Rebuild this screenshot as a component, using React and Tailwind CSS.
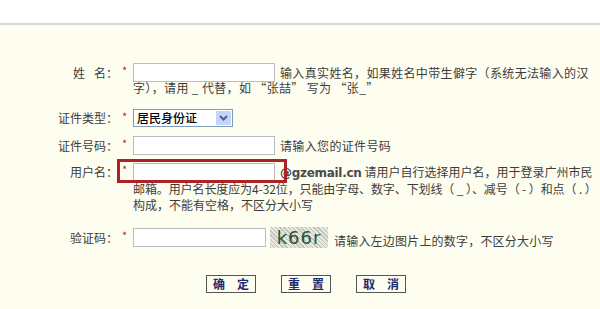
import React from 'react'

const Star = () => (
    <span className="w-[15px] shrink-0 pl-[4px] pt-[1px] text-[11px] leading-[12px] text-[#b3302c]">*</span>
)

const Input = ({ w = 'w-[142px]' }) => (
    <div className={`${w} h-[19px] shrink-0 border border-[#b9bcc4] bg-white`} />
)

export default function App() {
    return (
        <div className="relative w-[600px] h-[309px] overflow-hidden bg-[#fefef0] text-[12px] text-[#3c3c3c] font-['Noto_Sans_CJK_SC',sans-serif]">
            <div className="h-[25px] bg-white border-b-2 border-[#d6d6d2]" />

            <div className="pt-[38px]">
                {/* 姓名 */}
                <div className="flex items-start">
                    <div className="w-[118px] shrink-0 text-right leading-[19px]">姓<span className="inline-block w-[9px]" />名：</div>
                    <Star />
                    <div>
                        <div className="flex items-center">
                            <Input />
                            <span className="ml-[5px] leading-[19px] whitespace-nowrap tracking-[0.35px]">输入真实姓名，如果姓名中带生僻字（系统无法输入的汉</span>
                        </div>
                        <div className="mt-[-2px] leading-[16px] whitespace-nowrap tracking-[0.35px]">字），请用 _ 代替，如 “张喆” 写为 “张_”</div>
                    </div>
                </div>

                {/* 证件类型 */}
                <div className="flex items-start mt-[13px]">
                    <div className="w-[118px] shrink-0 text-right leading-[18px]">证件类型：</div>
                    <Star />
                    <div className="flex w-[100px] h-[18px] border border-[#7f9db9] bg-white">
                        <span className="flex-1 pl-[3px] leading-[16px] text-black font-medium">居民身份证</span>
                        <span className="flex w-[17px] items-center justify-center border border-white bg-[#c4d4fa]">
                            <svg width="9" height="6" viewBox="0 0 9 6">
                                <path d="M1 1 L4.5 4.5 L8 1" fill="none" stroke="#4d6185" strokeWidth="2" />
                            </svg>
                        </span>
                    </div>
                </div>

                {/* 证件号码 */}
                <div className="flex items-start mt-[9px]">
                    <div className="w-[118px] shrink-0 text-right leading-[19px]">证件号码：</div>
                    <Star />
                    <Input />
                    <span className="ml-[5px] leading-[19px] whitespace-nowrap tracking-[0.35px]">请输入您的证件号码</span>
                </div>

                {/* 用户名 */}
                <div className="relative flex items-start mt-[7px]">
                    <div className="w-[118px] shrink-0 text-right leading-[19px]">用户名：</div>
                    <Star />
                    <div>
                        <div className="flex items-center">
                            <Input />
                            <span className="ml-[5px] leading-[19px] whitespace-nowrap">
                                <b className="font-['DejaVu_Sans',sans-serif] text-[12px] tracking-[-0.3px] text-[#4a4a4a]">@gzemail.cn</b>
                                <span className="ml-[3px]">请用户自行选择用户名，用于登录广州市民</span>
                            </span>
                        </div>
                        <div className="mt-[-2px] leading-[16px] whitespace-nowrap tracking-[-0.1px]">邮箱。用户名长度应为4-32位，只能由字母、数字、下划线（ _ ）、减号（ - ）和点（ . ）</div>
                        <div className="leading-[16px] whitespace-nowrap">构成，不能有空格，不区分大小写</div>
                    </div>
                    <div className="absolute left-[117px] top-[-3px] w-[170px] h-[24px] border-[3px] border-[#ad2229]" />
                </div>

                {/* 验证码 */}
                <div className="flex items-center mt-[14px]">
                    <div className="w-[118px] shrink-0 text-right leading-[19px]">验证码：</div>
                    <span className="w-[15px] shrink-0 self-start pl-[4px] pt-[2px] text-[11px] leading-[12px] text-[#b3302c]">*</span>
                    <Input w="w-[133px]" />
                    <div className="ml-[4px] flex w-[58px] h-[21px] items-center justify-center bg-[#d3d7cf] bg-[repeating-linear-gradient(45deg,#bcc2b8_0px,#bcc2b8_1px,#e6e8e1_1px,#e6e8e1_3px)] font-['DejaVu_Sans',sans-serif] text-[18px] leading-[21px] tracking-[1px] text-[#2b5236]">
                        k66r
                    </div>
                    <span className="ml-[6px] self-end leading-[14px] whitespace-nowrap tracking-[0.2px]">请输入左边图片上的数字，不区分大小写</span>
                </div>

                {/* buttons */}
                <div className="flex gap-[25px] pl-[206px] mt-[27px]">
                    {['确　定', '重　置', '取　消'].map(t => (
                        <button key={t} className="w-[50px] h-[18px] border border-[#555] bg-[#fefef0] text-[12px] leading-[16px] font-bold text-[#1e2a6e]">
                            {t}
                        </button>
                    ))}
                </div>
            </div>
        </div>
    )
}
